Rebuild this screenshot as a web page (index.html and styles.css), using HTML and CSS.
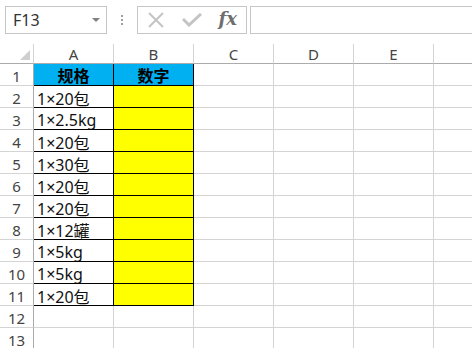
FILE: index.html
```html
<!DOCTYPE html>
<html>
<head>
<meta charset="utf-8">
<link rel="stylesheet" href="styles.css">
</head>
<body>
<div class="app">
  <div class="toolbar">
    <div class="namebox"><span class="ref">F13</span><span class="caret"></span></div>
    <div class="grip"><i></i><i></i><i></i></div>
    <div class="fbtns">
      <svg class="ico" width="18" height="18" viewBox="0 0 18 18"><path d="M2 2 L16 16 M16 2 L2 16" stroke="#c4c4c4" stroke-width="2" fill="none"/></svg>
      <svg class="ico" width="20" height="14" viewBox="0 0 20 14"><path d="M1 6 L7 12 L19 1" stroke="#c4c4c4" stroke-width="3" fill="none"/></svg>
      <span class="fx">fx</span>
    </div>
    <div class="fbar"></div>
  </div>
  <div class="sheet">
    <div class="c corner"><span class="tri"></span></div>
    <div class="c h">A</div><div class="c h">B</div><div class="c h">C</div><div class="c h">D</div><div class="c h">E</div><div class="c h hf">F</div>

    <div class="c r">1</div><div class="c bd blue b">规格</div><div class="c bd blue b">数字</div><div class="c"></div><div class="c"></div><div class="c"></div><div class="c"></div>
    <div class="c r">2</div><div class="c bd t">1×20包</div><div class="c bd yel"></div><div class="c"></div><div class="c"></div><div class="c"></div><div class="c"></div>
    <div class="c r">3</div><div class="c bd t">1×2.5kg</div><div class="c bd yel"></div><div class="c"></div><div class="c"></div><div class="c"></div><div class="c"></div>
    <div class="c r">4</div><div class="c bd t">1×20包</div><div class="c bd yel"></div><div class="c"></div><div class="c"></div><div class="c"></div><div class="c"></div>
    <div class="c r">5</div><div class="c bd t">1×30包</div><div class="c bd yel"></div><div class="c"></div><div class="c"></div><div class="c"></div><div class="c"></div>
    <div class="c r">6</div><div class="c bd t">1×20包</div><div class="c bd yel"></div><div class="c"></div><div class="c"></div><div class="c"></div><div class="c"></div>
    <div class="c r">7</div><div class="c bd t">1×20包</div><div class="c bd yel"></div><div class="c"></div><div class="c"></div><div class="c"></div><div class="c"></div>
    <div class="c r">8</div><div class="c bd t">1×12罐</div><div class="c bd yel"></div><div class="c"></div><div class="c"></div><div class="c"></div><div class="c"></div>
    <div class="c r">9</div><div class="c bd t">1×5kg</div><div class="c bd yel"></div><div class="c"></div><div class="c"></div><div class="c"></div><div class="c"></div>
    <div class="c r">10</div><div class="c bd t">1×5kg</div><div class="c bd yel"></div><div class="c"></div><div class="c"></div><div class="c"></div><div class="c"></div>
    <div class="c r">11</div><div class="c bd t">1×20包</div><div class="c bd yel"></div><div class="c"></div><div class="c"></div><div class="c"></div><div class="c"></div>
    <div class="c r">12</div><div class="c"></div><div class="c"></div><div class="c"></div><div class="c"></div><div class="c"></div><div class="c"></div>
    <div class="c r">13</div><div class="c"></div><div class="c"></div><div class="c"></div><div class="c"></div><div class="c"></div><div class="c"></div>
  </div>
</div>
</body>
</html>
```

FILE: styles.css
```css
html, body {
  margin: 0;
  padding: 0;
  background: #ffffff;
}
.app {
  width: 472px;
  height: 348px;
  overflow: hidden;
  font-family: "Noto Sans", "Noto Sans CJK SC", sans-serif;
  color: #222;
}
.toolbar {
  height: 44px;
  box-sizing: border-box;
  padding: 6px 0 0 5px;
  display: flex;
  align-items: flex-start;
}
.namebox {
  width: 102px;
  height: 28px;
  box-sizing: border-box;
  border: 1px solid #c6c6c6;
  display: flex;
  align-items: center;
  justify-content: space-between;
  padding: 0 6px 0 7px;
}
.ref {
  font-size: 16px;
  color: #333;
}
.caret {
  width: 0;
  height: 0;
  border-left: 4px solid transparent;
  border-right: 4px solid transparent;
  border-top: 4px solid #808080;
}
.grip {
  width: 30px;
  height: 28px;
  display: flex;
  flex-direction: column;
  align-items: center;
  justify-content: center;
  gap: 2px;
}
.grip i {
  display: block;
  width: 2px;
  height: 2px;
  background: #a0a0a0;
}
.fbtns {
  width: 110px;
  height: 28px;
  box-sizing: border-box;
  border: 1px solid #c6c6c6;
  display: flex;
  align-items: center;
  justify-content: space-between;
  padding: 0 9px 0 9px;
}
.fx {
  font-family: "DejaVu Serif", "Liberation Serif", serif;
  font-style: italic;
  font-weight: bold;
  font-size: 18px;
  color: #6e6e6e;
  line-height: 1;
  margin-top: -2px;
}
.fbar {
  margin-left: 3px;
  flex: 1;
  height: 28px;
  box-sizing: border-box;
  border: 1px solid #c6c6c6;
  border-right: none;
}
.sheet {
  display: grid;
  grid-template-columns: 34px repeat(5, 80px) 1fr;
  grid-template-rows: 20px repeat(13, 22px);
}
.c {
  box-sizing: border-box;
  border-right: 1px solid #d4d4d4;
  border-bottom: 1px solid #d4d4d4;
  font-size: 16px;
  display: flex;
  align-items: center;
  overflow: hidden;
  white-space: nowrap;
}
.h {
  justify-content: center;
  border-bottom-color: #ababab;
  color: #444;
  font-size: 15px;
  padding-top: 1px;
}
.hf {
  justify-content: flex-start;
  padding-left: 38px;
  color: #d4883a;
}
.corner {
  border-bottom-color: #ababab;
  border-right-color: #d4d4d4;
  justify-content: flex-end;
  align-items: flex-end;
  padding: 0 3px 3px 0;
}
.tri {
  display: block;
  width: 10px;
  height: 10px;
  background: #cfcfcf;
  clip-path: polygon(100% 0, 100% 100%, 0 100%);
}
.r {
  justify-content: center;
  border-right-color: #ababab;
  color: #444;
  font-size: 15px;
  padding-top: 2px;
}
.bd {
  border-right-color: #000;
  border-bottom-color: #000;
}
.blue {
  background: #00b0f0;
  justify-content: center;
}
.yel {
  background: #ffff00;
}
.b {
  font-weight: bold;
  color: #000;
  padding-top: 1px;
}
.t {
  padding-left: 3px;
  padding-top: 2px;
  color: #111;
}
```
